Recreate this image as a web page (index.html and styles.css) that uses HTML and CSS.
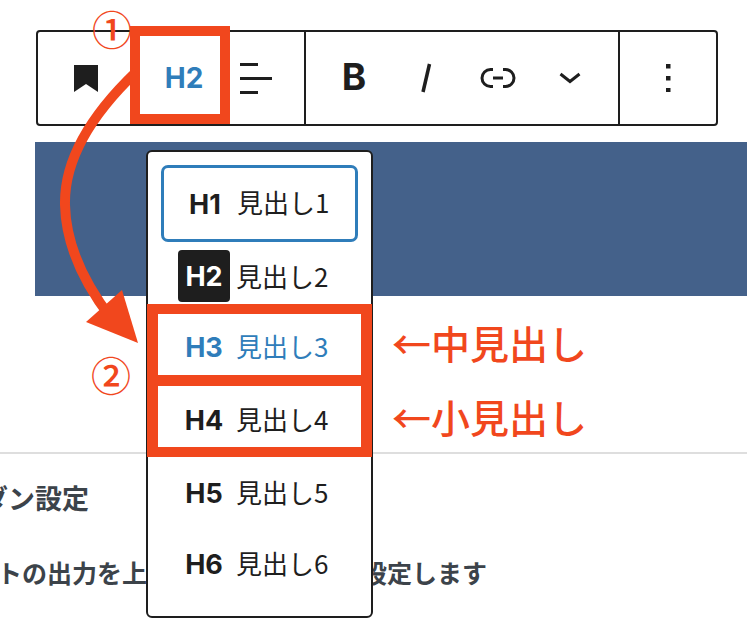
FILE: index.html
```html
<!DOCTYPE html>
<html lang="ja">
<head>
<meta charset="utf-8">
<title>見出し設定</title>
<link rel="stylesheet" href="styles.css">
</head>
<body>
<div class="page">
  <div class="toolbar">
    <div class="group group-a">
      <span class="btn btn-bookmark">
        <svg width="26" height="29" viewBox="0 0 26 29"><path d="M1 1h24v27L13 20 1 28z" fill="#1e1e1e"/></svg>
      </span>
      <span class="btn btn-h2">H2</span>
      <span class="btn">
        <svg width="32" height="32" viewBox="0 0 32 32"><path d="M0 2.5h18M0 16.5h32M0 30.5h18" stroke="#1e1e1e" stroke-width="3" fill="none"/></svg>
      </span>
    </div>
    <div class="group group-b">
      <span class="btn btn-b">B</span>
      <span class="btn btn-i">
        <svg width="12" height="30" viewBox="0 0 12 30"><path d="M9.500 1 3 29" stroke="#1e1e1e" stroke-width="3.500" fill="none"/></svg>
      </span>
      <span class="btn">
        <svg width="36" height="22" viewBox="0 0 36 22"><path d="M13 2.500H10.500a8.500 8.500 0 0 0 0 17H13M23 2.500h2.500a8.500 8.500 0 0 1 0 17H23M13 11h10" stroke="#1e1e1e" stroke-width="3" fill="none"/></svg>
      </span>
      <span class="btn">
        <svg width="22" height="12" viewBox="0 0 22 12"><path d="M1.500 2 11 9.500 20.500 2" stroke="#1e1e1e" stroke-width="3" fill="none"/></svg>
      </span>
    </div>
    <div class="group group-c">
      <svg width="5" height="28" viewBox="0 0 5 28"><path d="M0 0h4.500v4.500H0zM0 12h4.500v4.500H0zM0 24h4.500v4.500H0z" fill="#1e1e1e"/></svg>
    </div>
  </div>

  <div class="band"></div>
  <div class="rule"></div>

  <p class="setting setting-title">ダン設定</p>
  <p class="setting setting-desc"><span class="desc-left">トの出力を上</span><span>設定します</span></p>
</div>

<div class="menu">
  <div class="row row-1"><b class="tag">H1</b><span>見出し1</span></div>
  <div class="row row-2"><b class="tag tag-active">H2</b><span>見出し2</span></div>
  <div class="row row-3"><b class="tag">H3</b><span>見出し3</span></div>
  <div class="row row-4"><b class="tag">H4</b><span>見出し4</span></div>
  <div class="row row-5"><b class="tag">H5</b><span>見出し5</span></div>
  <div class="row row-6"><b class="tag">H6</b><span>見出し6</span></div>
</div>

<div class="mark mark-h2"></div>
<div class="mark-stack"><div class="mark-cell"></div><div class="mark-cell mark-cell-last"></div></div>

<svg class="arrow" width="150" height="350" viewBox="0 0 150 350">
  <path d="M136 72C88 118 64 162 65 205C66 245 84 283 111 318" fill="none" stroke="#f1471d" stroke-width="10"/>
  <path d="M122 290 138 343 86 322z" fill="#f1471d"/>
</svg>

<span class="num num-1">①</span>
<span class="num num-2">②</span>
<span class="note note-1">←中見出し</span>
<span class="note note-2">←小見出し</span>
</body>
</html>
```

FILE: styles.css
```css
* { box-sizing: border-box; }
html, body {
  margin: 0;
  height: 632px;
  overflow: hidden;
  background: #fff;
  font-family: "Noto Sans CJK JP", "Noto Sans", sans-serif;
  color: #1e1e1e;
}
.page { padding-top: 30px; }

.toolbar {
  display: flex;
  width: 682px;
  height: 96px;
  margin-left: 36px;
  border: 2px solid #1e1e1e;
  border-radius: 4px;
}
.group { display: flex; align-items: center; height: 100%; }
.group-a { width: 268px; padding-left: 12px; border-right: 2px solid #1e1e1e; }
.group-b { width: 314px; padding-left: 12px; border-right: 2px solid #1e1e1e; }
.group-c { flex: 1; justify-content: center; }
.btn {
  display: flex;
  align-items: center;
  justify-content: center;
  width: 72px;
  height: 100%;
  flex: none;
}
.btn-h2 {
  margin-left: 26px;
  color: #2f7dba;
  font: 700 28px Inter, sans-serif;
}
.btn-b { font: 700 37px Inter, sans-serif; padding-bottom: 4px; }

.band {
  height: 154px;
  margin: 16px 0 0 35px;
  background: #44618a;
}
.rule { height: 2px; margin-top: 156px; background: #dedede; }

.setting {
  margin: 0;
  font-size: 25px;
  font-weight: 700;
  line-height: 36px;
  color: #3c434a;
  white-space: nowrap;
}
.setting-title { margin: 26px 0 0 -19px; font-size: 27px; }
.setting-desc {
  display: flex;
  justify-content: space-between;
  width: 487px;
  margin-top: 38px;
}
.desc-left { margin-left: -3px; }

.menu {
  position: absolute;
  left: 146px;
  top: 150px;
  width: 227px;
  height: 468px;
  padding: 13px;
  background: #fff;
  border: 2px solid #1e1e1e;
  border-radius: 6px;
  font-size: 26px;
  line-height: 1;
}
.row { display: flex; align-items: center; gap: 6px; padding-left: 17px; height: 70px; padding-bottom: 3px; }
.row-1 { height: 77px; padding-left: 15px; border: 3px solid #2f7dba; border-radius: 7px; }
.row-2 { padding-bottom: 2px; }
.row-3 { color: #2f7dba; }
.row-4 { height: 76px; }
.row-6 { height: 72px; }
.tag {
  display: flex;
  align-items: center;
  justify-content: center;
  width: 52px;
  height: 52px;
  padding-top: 4px;
  font: 700 27px Inter, sans-serif;
}
.tag-active { padding-top: 0; background: #1e1e1e; color: #fff; border-radius: 4px; }

.mark { position: absolute; border: 10px solid #f1471d; }
.mark-h2 { left: 130px; top: 26px; width: 100px; height: 98px; }
.mark-stack {
  position: absolute;
  left: 147px;
  top: 304px;
  width: 225px;
  height: 153px;
  display: flex;
  flex-direction: column;
  border: solid #f1471d;
  border-width: 10px 11px;
}
.mark-cell { flex: none; height: 72px; border-bottom: 11px solid #f1471d; }
.mark-cell-last { height: 61px; border-bottom: 0; }

.arrow { position: absolute; left: 0; top: 0; }
.num {
  position: absolute;
  font-size: 40px;
  line-height: 40px;
  font-weight: 500;
  color: #f1471d;
}
.num-1 { left: 92px; top: 8px; }
.num-2 { left: 91px; top: 354px; }
.note {
  position: absolute;
  left: 392px;
  font-size: 39px;
  line-height: 46px;
  font-weight: 500;
  color: #f1471d;
  white-space: nowrap;
}
.note-1 { top: 319px; }
.note-2 { top: 393px; }
```
